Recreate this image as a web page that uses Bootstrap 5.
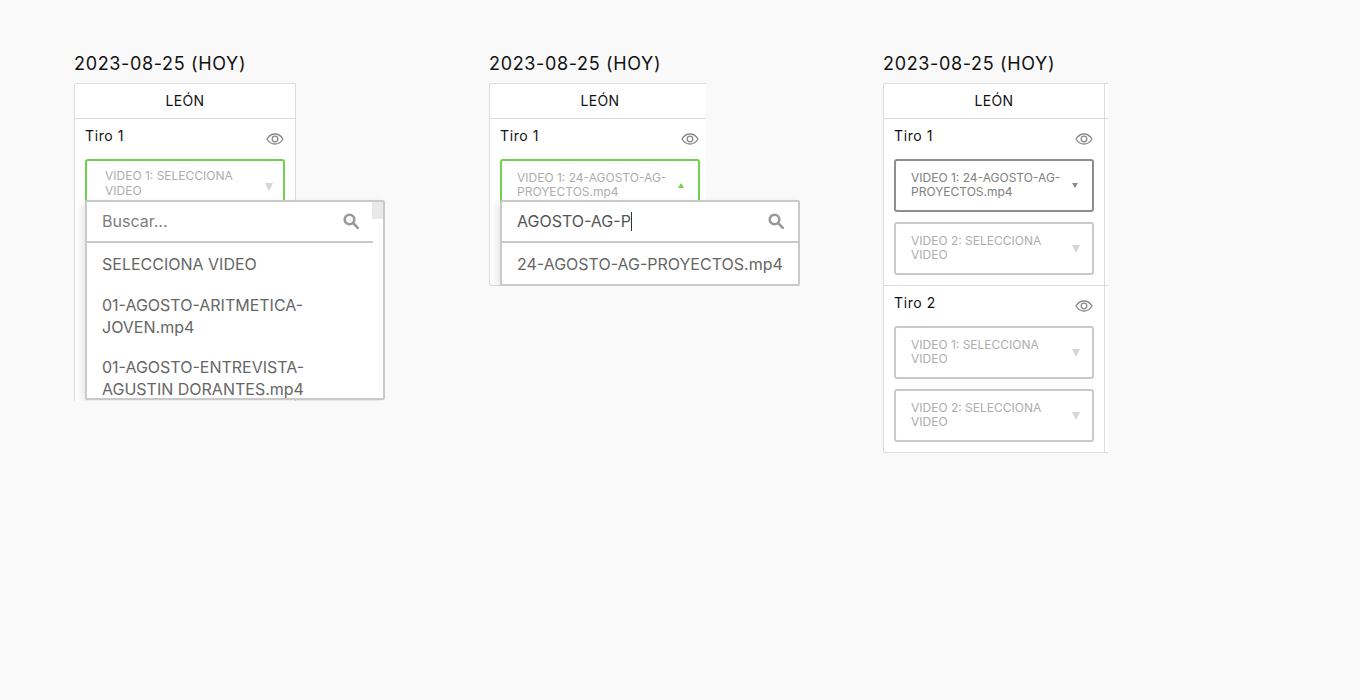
<!DOCTYPE html>
<html lang="es">
<head>
  <meta charset="utf-8" />
  <meta name="viewport" content="width=device-width, initial-scale=1" />
  <title>Tiros – Selección de video</title>
  <link href="https://cdn.jsdelivr.net/npm/bootstrap@5.3.2/dist/css/bootstrap.min.css" rel="stylesheet" />
  <style>
    body {
      background-color: #f9f9f9;
      font-family: Inter, "Liberation Sans", sans-serif;
      color: #111;
      height: 700px;
      overflow: hidden;
    }
    .lienzo { padding: 52px 0 0 74px; }
    .lienzo-a { width: 415px; }
    .lienzo-b { width: 394px; }
    .lienzo-c { width: 225px; }
    .fecha {
      font-size: 18px;
      font-weight: 400;
      line-height: 24px;
      letter-spacing: .65px;
      margin: 0 0 7px;
      white-space: nowrap;
    }
    .marco { position: relative; }
    .marco-a { height: 318px; width: 311px; overflow: hidden; }
    .marco-b { height: 203px; width: 311px; overflow: hidden; }
    .marco-c { height: 370px; width: 225px; overflow: hidden; }
    .tabla {
      background: #fff;
      border: 1px solid #dcdcdc;
      border-radius: 3px 0 0 3px;
      width: 222px;
      overflow: hidden;
    }
    .marco-a .tabla { height: 330px; }
    .marco-b .tabla { width: 217px; height: 203px; border-right: 0; }
    .marco-c .tabla { width: 225px; height: 370px; border-right: 0; box-shadow: 0 1px 1px #e4e4e4; }
    .columna { width: 220px; flex-shrink: 0; }
    .marco-c .columna { width: 221px; border-right: 1px solid #dcdcdc; }
    .columna-sig { flex-grow: 1; }
    .equipo {
      height: 35px;
      line-height: 34px;
      font-size: 14px;
      letter-spacing: .35px;
      text-align: center;
      border-bottom: 1px solid #dcdcdc;
    }
    .tiro { padding: 0 10px 0 10px; height: 167px; border-bottom: 1px solid #dcdcdc; }
    .tiro:last-child { border-bottom: 0; }
    .tiro-cab { height: 40px; padding-top: 8px; font-size: 14px; line-height: 18px; letter-spacing: .6px; }
    .ojo { width: 18px; height: 14px; margin-top: 5px; margin-right: 1px; }
    .selector {
      width: 200px;
      height: 53px;
      border: 2px solid #c9c9c9;
      border-radius: 3px;
      margin-bottom: 10px;
      padding: 0 12px 0 15px;
      font-size: 12px;
      line-height: 14px;
      color: #adadad;
      background: #fff;
    }
    .selector-texto { width: 152px; margin-bottom: 1px; }
    .selector.abierto { border-color: #6fd24f; }
    .selector.elegido { border-color: #8e8e8e; color: #808080; }
    .selector.holgado { padding-left: 18px; padding-right: 10px; align-items: flex-start !important; }
    .selector.holgado .selector-texto { line-height: 15px; padding-top: 7px; width: 150px; }
    .selector.holgado .flecha { margin-top: 22px; }
    .flecha { width: 0; height: 0; border-left: 4.5px solid transparent; border-right: 4.5px solid transparent; border-top: 8px solid #d6d6d6; }
    .flecha-chica { border-left-width: 3px; border-right-width: 3px; border-top-width: 5px; border-top-color: #8a8a8a; margin: 0 2px 1px 0; }
    .flecha-sube { border-top: 0; border-bottom: 5px solid #6fd24f; margin: 0 2px 1px 0; border-left: 3px solid transparent; border-right: 3px solid transparent; }
    .menu-video {
      position: absolute;
      left: 11px;
      top: 117px;
      width: 300px;
      background: #fff;
      border: 2px solid #c9c9c9;
      border-radius: 2px;
      box-shadow: -3px 3px 8px rgba(0,0,0,.1);
      overflow: hidden;
      font-size: 16px;
      line-height: 22px;
      color: #666;
    }
    .marco-a .menu-video { height: 200px; }
    .marco-b .menu-video { left: 11px; height: 86px; }
    .buscador { height: 41px; border-bottom: 2px solid #c9c9c9; padding: 0 14.5px 2px 15px; }
    .buscador.escrito { color: #555; }
    .buscador-vacio { color: #7d7d7d; }
    .cursor { display: inline-block; width: 1px; height: 19px; background: #333; vertical-align: -4px; }
    .lupa { width: 16px; height: 16px; }
    .barra-lateral { position: absolute; right: 0; top: 0; width: 11px; height: 17px; background: #e9e9e9; }
    .marco-a .buscador { margin-right: 10px; }
    .opcion { padding: 0 15px; margin-bottom: 18px; }
    .opcion:first-child { margin-bottom: 19px; }
    .lista-video { padding-top: 10px; width: 270px; }
    .marco-b .lista-video { width: auto; }
  </style>
</head>
<body>
  <div class="lienzo d-flex align-items-start">

    <!-- Buscador abierto sin filtro -->
    <div class="lienzo-a flex-shrink-0">
      <h2 class="fecha">2023-08-25 (HOY)</h2>
      <div class="marco marco-a">
        <div class="tabla">
          <div class="columna">
            <div class="equipo">LEÓN</div>
            <div class="tiro">
              <div class="tiro-cab d-flex justify-content-between align-items-start">
                <span>Tiro 1</span>
                <svg class="ojo" viewBox="0 0 18 14" fill="none" stroke="#8a8a8a" stroke-width="1.3"><path d="M1 7c2-3.4 4.800-5 8-5s6 1.600 8 5c-2 3.400-4.800 5-8 5S3 10.400 1 7z"/><circle cx="9" cy="7" r="2.800"/></svg>
              </div>
              <div class="selector abierto holgado d-flex justify-content-between">
                <div class="selector-texto">VIDEO 1: SELECCIONA VIDEO</div>
                <span class="flecha"></span>
              </div>
            </div>
          </div>
        </div>
        <div class="menu-video">
          <span class="barra-lateral"></span>
          <div class="buscador buscador-vacio d-flex align-items-center justify-content-between">
            <span>Buscar...</span>
            <svg class="lupa" viewBox="0 0 16 16" fill="none" stroke="#9a9a9a" stroke-width="2.600"><circle cx="6.500" cy="6.500" r="4.800"/><path d="M10 10l4.800 4.800" stroke-linecap="round"/></svg>
          </div>
          <div class="lista-video">
            <div class="opcion">SELECCIONA VIDEO</div>
            <div class="opcion">01-AGOSTO-ARITMETICA-JOVEN.mp4</div>
            <div class="opcion">01-AGOSTO-ENTREVISTA-AGUSTIN DORANTES.mp4</div>
          </div>
        </div>
      </div>
    </div>

    <!-- Buscador con filtro escrito -->
    <div class="lienzo-b flex-shrink-0">
      <h2 class="fecha">2023-08-25 (HOY)</h2>
      <div class="marco marco-b">
        <div class="tabla">
          <div class="columna">
            <div class="equipo">LEÓN</div>
            <div class="tiro">
              <div class="tiro-cab d-flex justify-content-between align-items-start">
                <span>Tiro 1</span>
                <svg class="ojo" viewBox="0 0 18 14" fill="none" stroke="#8a8a8a" stroke-width="1.3"><path d="M1 7c2-3.4 4.800-5 8-5s6 1.600 8 5c-2 3.400-4.800 5-8 5S3 10.400 1 7z"/><circle cx="9" cy="7" r="2.800"/></svg>
              </div>
              <div class="selector abierto d-flex justify-content-between align-items-center">
                <div class="selector-texto">VIDEO 1: 24-AGOSTO-AG-PROYECTOS.mp4</div>
                <span class="flecha flecha-sube"></span>
              </div>
            </div>
          </div>
        </div>
        <div class="menu-video">
          <div class="buscador escrito d-flex align-items-center justify-content-between">
            <span>AGOSTO-AG-P<span class="cursor"></span></span>
            <svg class="lupa" viewBox="0 0 16 16" fill="none" stroke="#9a9a9a" stroke-width="2.600"><circle cx="6.500" cy="6.500" r="4.800"/><path d="M10 10l4.800 4.800" stroke-linecap="round"/></svg>
          </div>
          <div class="lista-video">
            <div class="opcion">24-AGOSTO-AG-PROYECTOS.mp4</div>
          </div>
        </div>
      </div>
    </div>

    <!-- Selección hecha, menú cerrado -->
    <div class="lienzo-c flex-shrink-0">
      <h2 class="fecha">2023-08-25 (HOY)</h2>
      <div class="marco marco-c">
        <div class="tabla d-flex">
          <div class="columna">
            <div class="equipo">LEÓN</div>
            <div class="tiro">
              <div class="tiro-cab d-flex justify-content-between align-items-start">
                <span>Tiro 1</span>
                <svg class="ojo" viewBox="0 0 18 14" fill="none" stroke="#8a8a8a" stroke-width="1.3"><path d="M1 7c2-3.4 4.800-5 8-5s6 1.600 8 5c-2 3.400-4.800 5-8 5S3 10.400 1 7z"/><circle cx="9" cy="7" r="2.800"/></svg>
              </div>
              <div class="selector elegido d-flex justify-content-between align-items-center">
                <div class="selector-texto">VIDEO 1: 24-AGOSTO-AG-PROYECTOS.mp4</div>
                <span class="flecha flecha-chica"></span>
              </div>
              <div class="selector d-flex justify-content-between align-items-center">
                <div class="selector-texto">VIDEO 2: SELECCIONA VIDEO</div>
                <span class="flecha"></span>
              </div>
            </div>
            <div class="tiro">
              <div class="tiro-cab d-flex justify-content-between align-items-start">
                <span>Tiro 2</span>
                <svg class="ojo" viewBox="0 0 18 14" fill="none" stroke="#8a8a8a" stroke-width="1.3"><path d="M1 7c2-3.4 4.800-5 8-5s6 1.600 8 5c-2 3.400-4.800 5-8 5S3 10.400 1 7z"/><circle cx="9" cy="7" r="2.800"/></svg>
              </div>
              <div class="selector d-flex justify-content-between align-items-center">
                <div class="selector-texto">VIDEO 1: SELECCIONA VIDEO</div>
                <span class="flecha"></span>
              </div>
              <div class="selector d-flex justify-content-between align-items-center">
                <div class="selector-texto">VIDEO 2: SELECCIONA VIDEO</div>
                <span class="flecha"></span>
              </div>
            </div>
          </div>
          <!-- siguiente equipo, recortado por el marco -->
          <div class="columna-sig">
            <div class="equipo"></div>
            <div class="tiro"></div>
            <div class="tiro"></div>
          </div>
        </div>
      </div>
    </div>

  </div>
  <script src="https://cdn.jsdelivr.net/npm/bootstrap@5.3.2/dist/js/bootstrap.bundle.min.js"></script>
</body>
</html>
